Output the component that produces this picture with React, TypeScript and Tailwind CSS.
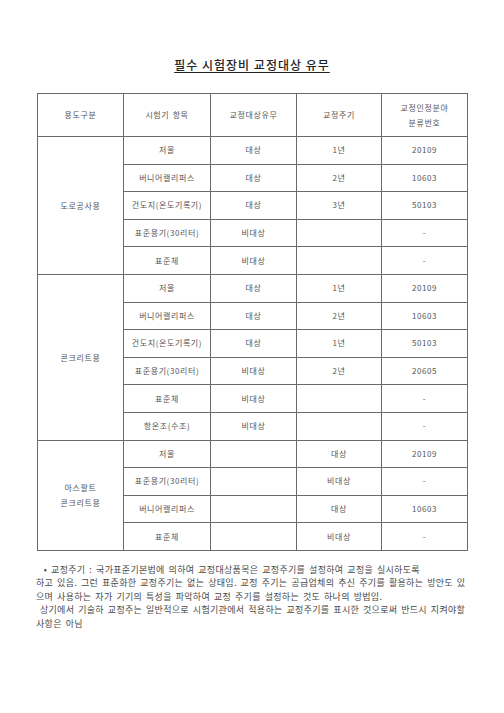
const rows: { group: string; items: string[][] }[] = [
  {
    group: "도로공사용",
    items: [
      ["저울", "대상", "1년", "20109"],
      ["버니어캘리퍼스", "대상", "2년", "10603"],
      ["건도지(온도기록기)", "대상", "3년", "50103"],
      ["표준용기(30리터)", "비대상", "", "-"],
      ["표준체", "비대상", "", "-"],
    ],
  },
  {
    group: "콘크리트용",
    items: [
      ["저울", "대상", "1년", "20109"],
      ["버니어캘리퍼스", "대상", "2년", "10603"],
      ["건도지(온도기록기)", "대상", "1년", "50103"],
      ["표준용기(30리터)", "비대상", "2년", "20605"],
      ["표준체", "비대상", "", "-"],
      ["항온조(수조)", "비대상", "", "-"],
    ],
  },
  {
    group: "아스팔트\n콘크리트용",
    items: [
      ["저울", "", "대상", "20109"],
      ["표준용기(30리터)", "", "비대상", "-"],
      ["버니어캘리퍼스", "", "대상", "10603"],
      ["표준체", "", "비대상", "-"],
    ],
  },
];

const cell = "border border-[#6a6a6a] text-center align-middle p-0";

export default function App() {
  return (
    <div
      className="w-[504px] min-h-[713px] bg-white text-[#555] pt-[58px]"
      style={{ fontFamily: '"Noto Sans CJK KR", "Noto Sans", sans-serif' }}
    >
      <h1 className="text-center text-[12px] leading-[14px] font-medium text-[#222] tracking-[1px]">
        <span className="underline underline-offset-[2px]">필수 시험장비 교정대상 유무</span>
      </h1>

      <table className="ml-[37px] mt-[21px] border-collapse table-fixed w-[430px] text-[8px] tracking-[0.6px] [word-spacing:1px]">
        <colgroup>
          <col className="w-[86px]" />
          <col className="w-[87px]" />
          <col className="w-[86px]" />
          <col className="w-[85px]" />
          <col className="w-[86px]" />
        </colgroup>
        <thead>
          <tr className="h-[43px]">
            <th className={`${cell} font-normal`}>용도구분</th>
            <th className={`${cell} font-normal`}>시험기 항목</th>
            <th className={`${cell} font-normal`}>교정대상유무</th>
            <th className={`${cell} font-normal`}>교정주기</th>
            <th className={`${cell} font-normal leading-[15px]`}>
              교정인정분야
              <br />
              분류번호
            </th>
          </tr>
        </thead>
        <tbody>
          {rows.map((g) =>
            g.items.map((r, i) => (
              <tr key={g.group + i} className="h-[27.6px]">
                {i === 0 && (
                  <td rowSpan={g.items.length} className={`${cell} whitespace-pre-line leading-[15px]`}>
                    {g.group}
                  </td>
                )}
                {r.map((v, j) => (
                  <td key={j} className={cell}>
                    {v}
                  </td>
                ))}
              </tr>
            ))
          )}
        </tbody>
      </table>

      <div className="ml-[36px] mt-[12px] text-[9px] leading-[13.4px] tracking-[0.3px] [word-spacing:1.6px] whitespace-nowrap text-[#4a4a4a]">
        <p>&nbsp;&nbsp;• 교정주기 : 국가표준기본법에 의하여 교정대상품목은 교정주기를 설정하여 교정을 실시하도록</p>
        <p>하고 있음. 그런 표준화한 교정주기는 없는 상태임. 교정 주기는 공급업체의 추신 주기를 활용하는 방안도 있</p>
        <p>으며 사용하는 자가 기기의 특성을 파악하여 교정 주기를 설정하는 것도 하나의 방법임.</p>
        <p>&nbsp;상기에서 기술하 교정주는 일반적으로 시험기관에서 적용하는 교정주기를 표시한 것으로써 반드시 지켜야할</p>
        <p>사항은 아님</p>
      </div>
    </div>
  );
}
